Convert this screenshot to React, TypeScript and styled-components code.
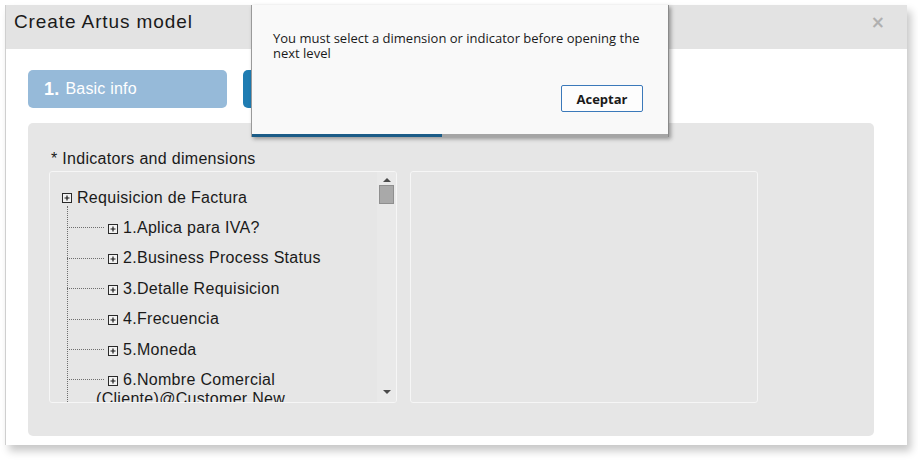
import React from "react";
import styled, { createGlobalStyle } from "styled-components";

const Global = createGlobalStyle`
  html, body { margin: 0; padding: 0; background: #ffffff; }
  body { font-family: "Liberation Sans", Arial, sans-serif; }
  * { box-sizing: border-box; }
`;

const Page = styled.div`
  position: relative;
  width: 918px;
  height: 460px;
  padding: 5px 0 0 5px;
`;

const Modal = styled.div`
  width: 902px;
  height: 440px;
  background: #ffffff;
  border-left: 1px solid #cfcfcf;
  box-shadow: 4px 6px 8px rgba(0, 0, 0, 0.22);
  display: flex;
  flex-direction: column;
`;

const Header = styled.div`
  height: 44px;
  background: #e3e3e3;
  display: flex;
  align-items: flex-start;
  justify-content: space-between;
  padding: 6px 22px 0 8px;
`;

const Title = styled.h1`
  margin: 0;
  font-family: "Liberation Sans", Arial, sans-serif;
  font-weight: normal;
  font-size: 19px;
  letter-spacing: 0.9px;
  line-height: 22px;
  color: #1a1a1a;
`;

const Close = styled.span`
  font-family: "DejaVu Sans", sans-serif;
  font-size: 17px;
  font-weight: bold;
  line-height: 20px;
  margin-top: 1px;
  color: #b0b0b0;
`;

const Body = styled.div`
  flex: 1;
  display: flex;
  flex-direction: column;
  padding: 21px 33px 9px 22px;
`;

const Steps = styled.div`
  display: flex;
  gap: 16px;
  margin-bottom: 15px;
`;

const Step = styled.div<{ $active?: boolean }>`
  width: 199px;
  height: 38px;
  border-radius: 5px;
  background: ${(p) => (p.$active ? "#1f7cb2" : "#96bad9")};
  color: #ffffff;
  display: flex;
  align-items: center;
  padding-left: 16px;
  font-size: 16px;
  letter-spacing: 0.2px;
`;

const StepNum = styled.span`
  font-size: 18px;
  font-weight: bold;
  margin-right: 6px;
`;

const Panel = styled.div`
  height: 313px;
  background: #e6e6e6;
  border-radius: 5px;
  padding: 26px 0 0 21px;
`;

const Label = styled.div`
  font-size: 16px;
  letter-spacing: 0.3px;
  line-height: 19px;
  color: #1a1a1a;
  margin: 0 0 3px 2px;
`;

const Boxes = styled.div`
  display: flex;
  gap: 13px;
`;

const Box = styled.div`
  position: relative;
  width: 348px;
  height: 232px;
  border: 1px solid #f6f6f6;
  border-radius: 3px;
  background: #e6e6e6;
  overflow: hidden;
`;

const Tree = styled.div`
  padding: 10px 0 0 12px;
  width: 330px;
`;

const RootRow = styled.div`
  display: flex;
  align-items: flex-start;
  padding: 5.7px 0;
  font-size: 16px;
  letter-spacing: 0.3px;
  line-height: 19px;
  color: #1a1a1a;
`;

const ChildRow = styled.div`
  position: relative;
  width: 270px;
  padding: 5.7px 0 5.7px 34px;
  text-indent: 12px;
  font-size: 16px;
  letter-spacing: 0.3px;
  line-height: 19px;
  color: #1a1a1a;
`;

const Children = styled.div`
  position: relative;
  &::before {
    content: "";
    position: absolute;
    left: 5px;
    top: -6px;
    bottom: -40px;
    border-left: 1px dotted #6e6e6e;
  }
`;

const Connector = styled.span`
  position: absolute;
  left: 5px;
  top: 15px;
  width: 37px;
  border-top: 1px dotted #6e6e6e;
`;

const IconWrap = styled.span<{ $inline?: boolean }>`
  flex: none;
  display: inline-block;
  text-indent: 0;
  vertical-align: ${(p) => (p.$inline ? "-1px" : "baseline")};
  margin: ${(p) => (p.$inline ? "0 5px 0 0" : "5px 5px 0 0")};
  width: 10px;
  height: 10px;
  line-height: 0;
`;

const Scroll = styled.div`
  position: absolute;
  right: 0;
  top: 0;
  bottom: 0;
  width: 19px;
  background: #e9e9e9;
  display: flex;
  flex-direction: column;
  align-items: center;
  padding-top: 6px;
`;

const Thumb = styled.div`
  width: 15px;
  height: 19px;
  background: #a9a9a9;
  border: 1px solid #8f8f8f;
  margin-top: 3px;
`;

const Arrow = styled.div<{ $down?: boolean }>`
  width: 0;
  height: 0;
  border-left: 4px solid transparent;
  border-right: 4px solid transparent;
  ${(p) =>
    p.$down
      ? "border-top: 4px solid #4a4a4a; margin-top: auto; margin-bottom: 8px;"
      : "border-bottom: 4px solid #4a4a4a;"}
`;

const Dialog = styled.div`
  position: absolute;
  left: 251px;
  top: 5px;
  width: 418px;
  height: 132px;
  background: #f9f9f9;
  border-left: 1px solid #9a9a9a;
  border-right: 1px solid #8a8a8a;
  box-shadow: 2px 2px 4px rgba(0, 0, 0, 0.35);
  display: flex;
  flex-direction: column;
`;

const DialogText = styled.p`
  margin: 0;
  padding: 26px 22px 0 21px;
  font-family: "Open Sans", "DejaVu Sans", sans-serif;
  font-size: 13px;
  line-height: 15px;
  color: #1a1a1a;
`;

const DialogActions = styled.div`
  display: flex;
  justify-content: flex-end;
  padding: 24px 25px 0 0;
  flex: 1;
`;

const Button = styled.button`
  width: 82px;
  height: 27px;
  border: 1px solid #3b79ba;
  border-radius: 2px;
  background: #fdfdfd;
  font-family: "Open Sans", "DejaVu Sans", sans-serif;
  font-weight: bold;
  font-size: 13px;
  color: #1a1a1a;
  padding: 0;
`;

const Progress = styled.div`
  display: flex;
  height: 3px;
  background: #a5a5a5;
`;

const ProgressFill = styled.div`
  width: 190px;
  background: #1b5c87;
`;

const PlusIcon = ({ inline }: { inline?: boolean }) => (
  <IconWrap $inline={inline}>
    <svg width="10" height="10" viewBox="0 0 10 10">
      <rect x="0.5" y="0.5" width="9" height="9" fill="#f2f2f2" stroke="#2a2a2a" />
      <path d="M2.5 5h5M5 2.5v5" stroke="#1a1a1a" strokeWidth="1.2" />
    </svg>
  </IconWrap>
);

const items = [
  "1.Aplica para IVA?",
  "2.Business Process Status",
  "3.Detalle Requisicion",
  "4.Frecuencia",
  "5.Moneda",
  "6.Nombre Comercial (Cliente)@Customer New",
];

export default function App() {
  return (
    <Page>
      <Global />
      <Modal>
        <Header>
          <Title>Create Artus model</Title>
          <Close>×</Close>
        </Header>
        <Body>
          <Steps>
            <Step>
              <StepNum>1.</StepNum>Basic info
            </Step>
            <Step $active>
              <StepNum>2.</StepNum>Levels
            </Step>
          </Steps>
          <Panel>
            <Label>* Indicators and dimensions</Label>
            <Boxes>
              <Box>
                <Tree>
                  <RootRow>
                    <PlusIcon />
                    <span>Requisicion de Factura</span>
                  </RootRow>
                  <Children>
                    {items.map((t) => (
                      <ChildRow key={t}>
                        <Connector />
                        <PlusIcon inline />
                        {t}
                      </ChildRow>
                    ))}
                  </Children>
                </Tree>
                <Scroll>
                  <Arrow />
                  <Thumb />
                  <Arrow $down />
                </Scroll>
              </Box>
              <Box />
            </Boxes>
          </Panel>
        </Body>
      </Modal>
      <Dialog>
        <DialogText>
          You must select a dimension or indicator before opening the next level
        </DialogText>
        <DialogActions>
          <Button>Aceptar</Button>
        </DialogActions>
        <Progress>
          <ProgressFill />
        </Progress>
      </Dialog>
    </Page>
  );
}
